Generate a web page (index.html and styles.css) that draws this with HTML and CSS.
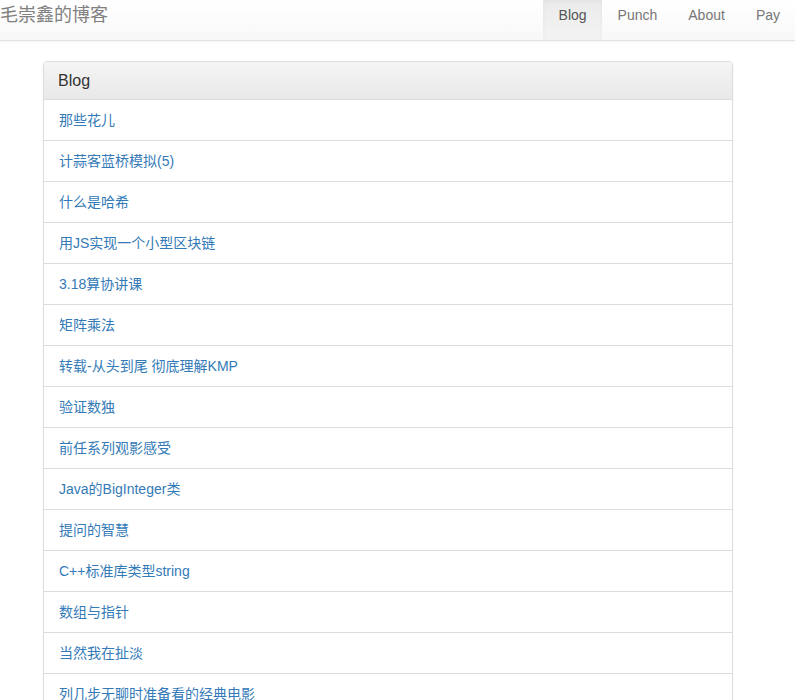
FILE: index.html
```html
<!DOCTYPE html>
<html lang="zh-CN">
<head>
<meta charset="utf-8">
<title>毛崇鑫的博客</title>
<link rel="stylesheet" href="styles.css">
</head>
<body>
<header class="navbar">
  <a class="brand" href="#">毛崇鑫的博客</a>
  <nav class="nav">
    <a class="nav-link active" href="#">Blog</a>
    <a class="nav-link" href="#">Punch</a>
    <a class="nav-link" href="#">About</a>
    <a class="nav-link" href="#">Pay</a>
  </nav>
</header>
<main class="container">
  <section class="panel">
    <div class="panel-heading"><h3 class="panel-title">Blog</h3></div>
    <div class="list-group">
      <a class="list-item" href="#">那些花儿</a>
      <a class="list-item" href="#">计蒜客蓝桥模拟(5)</a>
      <a class="list-item" href="#">什么是哈希</a>
      <a class="list-item" href="#">用JS实现一个小型区块链</a>
      <a class="list-item" href="#">3.18算协讲课</a>
      <a class="list-item" href="#">矩阵乘法</a>
      <a class="list-item" href="#">转载-从头到尾 彻底理解KMP</a>
      <a class="list-item" href="#">验证数独</a>
      <a class="list-item" href="#">前任系列观影感受</a>
      <a class="list-item" href="#">Java的BigInteger类</a>
      <a class="list-item" href="#">提问的智慧</a>
      <a class="list-item" href="#">C++标准库类型string</a>
      <a class="list-item" href="#">数组与指针</a>
      <a class="list-item" href="#">当然我在扯淡</a>
      <a class="list-item" href="#">列几步无聊时准备看的经典电影</a>
    </div>
  </section>
</main>
</body>
</html>
```
FILE: styles.css
```css
* { box-sizing: border-box; }
html, body { margin: 0; padding: 0; }
body {
  font-family: "Liberation Sans", "Noto Sans CJK SC", sans-serif;
  font-size: 14px;
  line-height: 20px;
  color: #333;
  background: #fff;
}
a { text-decoration: none; }

.navbar {
  display: flex;
  justify-content: space-between;
  align-items: stretch;
  height: 41px;
  background: linear-gradient(to bottom, #ffffff 0%, #f8f8f8 100%);
  border-bottom: 1px solid #e3e3e3;
  box-shadow: 0 1px 3px rgba(0,0,0,0.05);
}
.brand {
  font-size: 18px;
  line-height: 20px;
  color: #808080;
  padding: 5px 0 0 0;
}
.nav { display: flex; }
.nav-link {
  color: #777;
  padding: 5px 15px 15px 16px;
  font-size: 14px;
  line-height: 20px;
}
.nav-link.active {
  color: #555;
  background: linear-gradient(to bottom, #ebebeb 0%, #f3f3f3 100%);
  box-shadow: inset 0 2px 4px rgba(0,0,0,0.04);
}

.container {
  padding: 20px 0 0 43px;
}
.panel {
  width: 690px;
  border: 1px solid #dddddd;
  border-radius: 4px;
  box-shadow: 0 1px 2px rgba(0,0,0,0.05);
  background: #fff;
}
.panel-heading {
  padding: 10px 14px 9px;
  background: linear-gradient(to bottom, #f5f5f5 0%, #e8e8e8 100%);
  border-bottom: 1px solid #dddddd;
  border-radius: 3px 3px 0 0;
}
.panel-title {
  margin: 0;
  font-size: 16px;
  font-weight: normal;
  line-height: 17.6px;
  color: #333;
}
.list-group { display: flex; flex-direction: column; }
.list-item {
  display: block;
  padding: 10px 15px;
  line-height: 20px;
  color: #337ab7;
  border-bottom: 1px solid #dddddd;
}
```
